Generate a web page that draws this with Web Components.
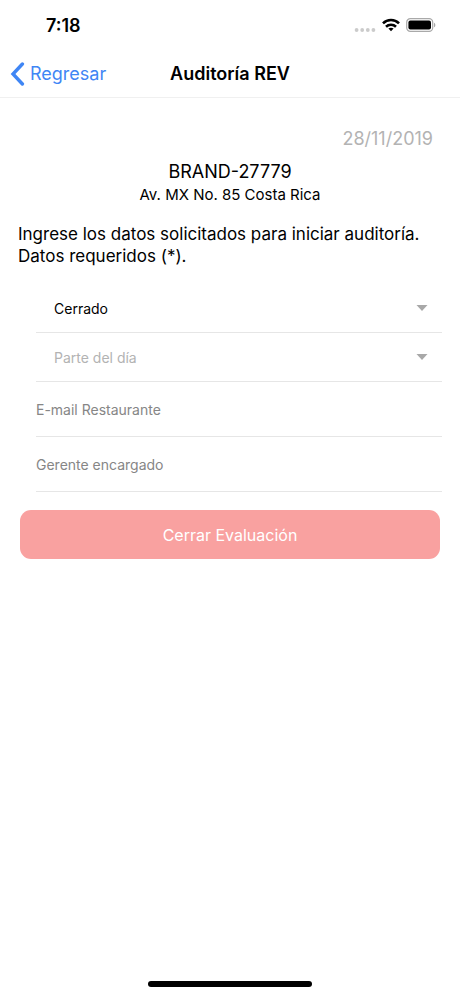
<!DOCTYPE html>
<html lang="es">
<head>
<meta charset="utf-8">
<meta name="viewport" content="width=device-width, initial-scale=1">
<title>Auditoría REV</title>
<style>
  body {
    margin: 0;
    font-family: Inter, "Liberation Sans", sans-serif;
    color: #000;
    background: #fff;
    --color-link: #3f86f5;
    --color-bar-line: #f0f0f0;
    --color-line: #e6e6e6;
    --color-muted: #b3b3b3;
    --color-label: #868686;
    --color-danger: #f9a1a0;
  }
</style>
</head>
<body>
<audit-page>
  <status-bar slot="top" time="7:18"></status-bar>
  <nav-bar slot="top" back="Regresar">Auditoría REV</nav-bar>
  <audit-summary>
    <span slot="date">28/11/2019</span>
    <span slot="name">BRAND-27779</span>
    <span slot="address">Av. MX No. 85 Costa Rica</span>
    Ingrese los datos solicitados para iniciar auditoría. Datos requeridos (*).
  </audit-summary>
  <field-list>
    <select-field label="Estado" value="Cerrado"></select-field>
    <select-field label="Parte del día" placeholder="Parte del día"></select-field>
    <text-field label="E-mail Restaurante" type="email"></text-field>
    <text-field label="Gerente encargado" type="text"></text-field>
  </field-list>
  <action-button>Cerrar Evaluación</action-button>
</audit-page>

<script>
class AuditPage extends HTMLElement {
  constructor() {
    super();
    this.attachShadow({ mode: "open" });
    this.shadowRoot.innerHTML = `
      <style>
        :host {
          display: flex;
          flex-direction: column;
          min-height: 100vh;
        }

        main {
          flex: 1;
        }

        footer {
          display: flex;
          justify-content: center;
          padding: 9px 0;
        }

        #home {
          width: 164px;
          height: 6px;
          border-radius: 3px;
          background: #000;
        }
      </style>
      <slot name="top"></slot>
      <main><slot></slot></main>
      <footer><div id="home"></div></footer>
    `;
  }
}

class StatusBar extends HTMLElement {
  constructor() {
    super();
    this.attachShadow({ mode: "open" });
    this.shadowRoot.innerHTML = `
      <style>
        :host {
          display: flex;
          justify-content: space-between;
          align-items: center;
          height: 50px;
          padding: 0 24px 0 46px;
        }

        #time {
          font-size: 18px;
          font-weight: 600;
        }

        #icons {
          display: flex;
          align-items: center;
          gap: 6px;
        }

        svg {
          display: block;
        }
      </style>
      <span id="time"></span>
      <div id="icons">
        <svg width="22" height="14" viewBox="0 0 22 14" fill="#cbcbcb"><circle cx="2.6" cy="12" r="1.9"/><circle cx="8.2" cy="12" r="1.9"/><circle cx="13.8" cy="12" r="1.9"/><circle cx="19.4" cy="12" r="1.9"/></svg>
        <svg width="18" height="14" viewBox="0 0 18 14" fill="none" stroke="#000" stroke-width="2.6"><path d="M1 5.3C5.4.9 12.6.9 17 5.3"/><path d="M4 8.7c2.8-2.7 7.2-2.7 10 0"/><path d="M9 13.2 6.4 10.6c1.4-1.3 3.8-1.3 5.2 0z" fill="#000" stroke="none"/></svg>
        <svg width="30" height="14" viewBox="0 0 30 14"><rect x=".7" y=".7" width="26" height="12.6" rx="3.6" fill="none" stroke="#a9a9a9" stroke-width="1.2"/><rect x="2.4" y="2.4" width="22.6" height="9.2" rx="2" fill="#000"/><path d="M28 4.7c1.8.6 1.8 4 0 4.6z" fill="#a9a9a9"/></svg>
      </div>
    `;
    this.shadowRoot.querySelector("#time").textContent = this.getAttribute("time") || "";
  }
}

class NavBar extends HTMLElement {
  constructor() {
    super();
    this.attachShadow({ mode: "open" });
    this.shadowRoot.innerHTML = `
      <style>
        :host {
          display: grid;
          grid-template-columns: 1fr auto 1fr;
          align-items: center;
          height: 47px;
          padding: 0 10px;
          border-bottom: 1px solid var(--color-bar-line);
        }

        button {
          justify-self: start;
          display: flex;
          align-items: center;
          gap: 5px;
          padding: 0;
          border: none;
          background: none;
          font: inherit;
          font-size: 18px;
          color: var(--color-link);
          cursor: pointer;
        }

        h1 {
          margin: 0;
          font-size: 18px;
          font-weight: 600;
        }
      </style>
      <button type="button">
        <svg width="15" height="24" viewBox="0 0 15 24" fill="none" stroke="currentColor" stroke-width="3.4" stroke-linecap="round"><path d="M12.4 2 3 12l9.4 10"/></svg>
        <span id="back"></span>
      </button>
      <h1><slot></slot></h1>
    `;
    this.shadowRoot.querySelector("#back").textContent = this.getAttribute("back") || "";
  }
}

class AuditSummary extends HTMLElement {
  constructor() {
    super();
    this.attachShadow({ mode: "open" });
    this.shadowRoot.innerHTML = `
      <style>
        :host {
          display: block;
          padding: 29px 18px 17px;
        }

        p, h2 {
          margin: 0;
          font-weight: 400;
        }

        #date {
          padding-right: 9px;
          font-size: 18px;
          line-height: 24px;
          text-align: right;
          color: var(--color-muted);
        }

        h2 {
          padding-top: 9px;
          font-size: 18px;
          line-height: 24px;
          text-align: center;
        }

        #address {
          font-size: 15px;
          line-height: 22px;
          text-align: center;
        }

        #intro {
          padding-top: 17px;
          font-size: 17px;
          line-height: 22px;
        }
      </style>
      <p id="date"><slot name="date"></slot></p>
      <h2><slot name="name"></slot></h2>
      <p id="address"><slot name="address"></slot></p>
      <p id="intro"><slot></slot></p>
    `;
  }
}

class FieldList extends HTMLElement {
  constructor() {
    super();
    this.attachShadow({ mode: "open" });
    this.shadowRoot.innerHTML = `
      <style>
        :host {
          display: block;
          margin: 0 18px 0 36px;
        }
      </style>
      <slot></slot>
    `;
  }
}

class SelectField extends HTMLElement {
  constructor() {
    super();
    this.attachShadow({ mode: "open" });
    this.shadowRoot.innerHTML = `
      <style>
        :host {
          display: flex;
          align-items: center;
          height: 48px;
          padding-right: 14px;
          border-bottom: 1px solid var(--color-line);
        }

        select {
          flex: 1;
          height: 100%;
          padding: 0 0 0 18px;
          border: none;
          background: none;
          appearance: none;
          font: inherit;
          font-size: 14px;
          color: inherit;
        }

        select.empty {
          color: var(--color-muted);
        }
      </style>
      <select><option></option></select>
      <svg width="12" height="6" viewBox="0 0 12 6" fill="#a8a8a8"><path d="M.5 0h11L6 6z"/></svg>
    `;
    const value = this.getAttribute("value");
    const select = this.shadowRoot.querySelector("select");
    select.setAttribute("aria-label", this.getAttribute("label"));
    select.classList.toggle("empty", !value);
    select.options[0].textContent = value || this.getAttribute("placeholder");
  }
}

class TextField extends HTMLElement {
  constructor() {
    super();
    this.attachShadow({ mode: "open" });
    this.shadowRoot.innerHTML = `
      <style>
        :host {
          display: flex;
          align-items: center;
          gap: 16px;
          height: 54px;
          border-bottom: 1px solid var(--color-line);
          font-size: 14px;
        }

        label {
          color: var(--color-label);
        }

        input {
          flex: 1;
          min-width: 0;
          height: 100%;
          padding: 0;
          border: none;
          outline: none;
          background: none;
          font: inherit;
        }
      </style>
      <label for="input"></label>
      <input id="input">
    `;
    this.shadowRoot.querySelector("label").textContent = this.getAttribute("label");
    this.shadowRoot.querySelector("input").type = this.getAttribute("type") || "text";
  }
}

class ActionButton extends HTMLElement {
  constructor() {
    super();
    this.attachShadow({ mode: "open" });
    this.shadowRoot.innerHTML = `
      <style>
        :host {
          display: block;
          padding: 18px 20px;
        }

        button {
          display: block;
          width: 100%;
          height: 49px;
          padding: 0;
          border: none;
          border-radius: 11px;
          background: var(--color-danger);
          font: inherit;
          font-size: 16px;
          color: #fff;
        }
      </style>
      <button type="button"><slot></slot></button>
    `;
  }
}

customElements.define("audit-page", AuditPage);
customElements.define("status-bar", StatusBar);
customElements.define("nav-bar", NavBar);
customElements.define("audit-summary", AuditSummary);
customElements.define("field-list", FieldList);
customElements.define("select-field", SelectField);
customElements.define("text-field", TextField);
customElements.define("action-button", ActionButton);
</script>
</body>
</html>
